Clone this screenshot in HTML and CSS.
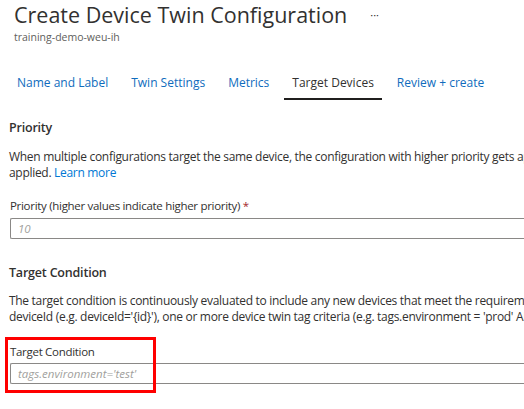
FILE: index.html
```html
<!DOCTYPE html>
<html lang="en">
<head>
<meta charset="utf-8">
<title>Create Device Twin Configuration</title>
<link rel="stylesheet" href="styles.css">
</head>
<body>
<div class="page">
  <header class="header">
    <div class="title-row">
      <h1 class="title">Create Device Twin Configuration</h1>
      <span class="more">···</span>
    </div>
    <div class="subtitle">training-demo-weu-ih</div>
  </header>

  <nav class="tabs">
    <a class="tab">Name and Label</a>
    <a class="tab">Twin Settings</a>
    <a class="tab">Metrics</a>
    <a class="tab active">Target Devices</a>
    <a class="tab">Review + create</a>
  </nav>

  <section class="section priority">
    <h2 class="section-title">Priority</h2>
    <p class="desc">When multiple configurations target the same device, the configuration with higher priority gets applied. If two configurations have the same priority, the one created most recently gets<br>applied. <a class="link">Learn more</a></p>
    <div class="field">
      <label class="label">Priority (higher values indicate higher priority) <span class="req">*</span></label>
      <div class="input"><span class="placeholder">10</span></div>
    </div>
  </section>

  <section class="section target">
    <h2 class="section-title">Target Condition</h2>
    <p class="desc">The target condition is continuously evaluated to include any new devices that meet the requirements or remove devices that no longer do. Use<br>deviceId (e.g. deviceId='{id}'), one or more device twin tag criteria (e.g. tags.environment = 'prod' AND tags.location = 'westus')</p>
    <div class="field">
      <label class="label">Target Condition</label>
      <div class="input"><span class="placeholder">tags.environment='test'</span></div>
      <div class="highlight"></div>
    </div>
  </section>
</div>
</body>
</html>
```

FILE: styles.css
```css
html, body {
  margin: 0;
  padding: 0;
  background: #ffffff;
  overflow: hidden;
}
body {
  width: 524px;
  height: 409px;
  font-family: "Open Sans", "Noto Sans", "Liberation Sans", sans-serif;
  color: #323130;
}
.page {
  width: 760px;
}
.header {
  padding: 1px 0 0 14px;
}
.title-row {
  display: flex;
  align-items: center;
  height: 28px;
}
.title {
  margin: 0;
  font-size: 21.5px;
  line-height: 28px;
  font-weight: 400;
  color: #323130;
  white-space: nowrap;
}
.more {
  margin-left: 23px;
  font-size: 11px;
  color: #323130;
  line-height: 1;
  margin-top: -2px;
}
.subtitle {
  margin-top: 1px;
  font-size: 10.5px;
  line-height: 14px;
  color: #605e5c;
}
.tabs {
  display: flex;
  margin-top: 23px;
  padding-left: 9px;
}
.tab {
  padding: 6px 8px 5px;
  margin-right: 7px;
  font-size: 12px;
  line-height: 20px;
  color: #0f6cbd;
  white-space: nowrap;
  border-bottom: 2px solid transparent;
}
.tab.active {
  color: #323130;
  border-bottom-color: #201f1e;
}
.section {
  padding-left: 9px;
}
.priority {
  margin-top: 18px;
}
.section-title {
  margin: 0;
  font-size: 12.5px;
  font-weight: 600;
  line-height: 20px;
  letter-spacing: -0.2px;
  color: #323130;
}
.desc {
  margin: 11px 0 0 0;
  font-size: 12px;
  line-height: 16px;
  letter-spacing: -0.3px;
  white-space: nowrap;
  color: #323130;
}
.link {
  color: #0078d4;
}
.field {
  position: relative;
  margin-top: 17px;
  padding-left: 1px;
}
.label {
  display: block;
  font-size: 11.5px;
  line-height: 16px;
  letter-spacing: -0.3px;
  color: #323130;
  white-space: nowrap;
}
.req {
  color: #a4262c;
}
.input {
  margin-top: 4px;
  height: 19px;
  border: 1px solid #8a8886;
  border-right: none;
  border-radius: 2px 0 0 2px;
  display: flex;
  align-items: center;
  padding-left: 7px;
}
.placeholder {
  font-size: 11.5px;
  font-style: italic;
  color: #a19f9d;
  white-space: nowrap;
}
.target {
  margin-top: 24px;
}
.target .desc {
  margin-top: 10px;
}
.target .field {
  margin-top: 19px;
}
.target .input {
  margin-top: 3px;
}
.highlight {
  position: absolute;
  left: -4px;
  top: -7px;
  width: 145px;
  height: 50px;
  border: 3px solid #ff0000;
}
```
